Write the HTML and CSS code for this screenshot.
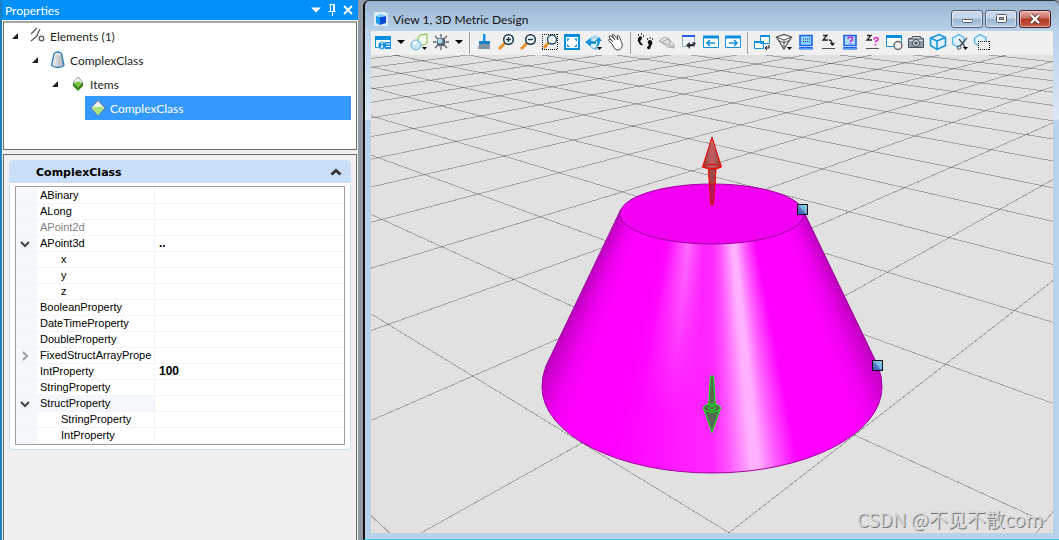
FILE: index.html
```html
<!DOCTYPE html>
<html lang="en">
<head>
  <meta charset="UTF-8">
  <meta name="viewport" content="width=device-width, initial-scale=1.0">
  <title>View 1, 3D Metric Design</title>
  <link rel="stylesheet" href="styles.css">
</head>
<body>
  <aside class="properties">
    <header class="panel-title">
      <h1>Properties</h1>
      <button class="panel-button" aria-label="Menu"><svg width="16" height="16" viewBox="0 0 16 16"><path d="M3 5.500h10L8 10.500z" fill="#fff"/></svg></button>
      <button class="panel-button" aria-label="Pin"><svg width="16" height="16" viewBox="0 0 16 16"><path d="M5.500 2.500h5M6.500 2.500v7M9.500 2.500v7M10.500 2.500v7M4.500 9.500h7M8.500 10v4" stroke="#fff" fill="none"/></svg></button>
      <button class="panel-button" aria-label="Close"><svg width="16" height="16" viewBox="0 0 16 16"><path d="M4 4l8 8M12 4l-8 8" stroke="#fff" stroke-width="2" fill="none"/></svg></button>
    </header>

    <div class="tree">
      <ul>
        <li>
          <div class="tree-row">
            <span class="toggle"></span>
            <span class="node"><svg width="20" height="20" viewBox="0 0 20 20" fill="none" stroke="#555" stroke-width="1.200"><path d="M4 8l6-6M4 15l7-6M10 9l3-6"/><circle cx="14.500" cy="12.500" r="2.300"/></svg>Elements (1)</span>
          </div>
          <ul>
            <li>
              <div class="tree-row">
                <span class="toggle"></span>
                <span class="node"><svg width="20" height="20" viewBox="0 0 20 20"><defs><linearGradient id="can"><stop offset="0" stop-color="#f4f4f4"/><stop offset="1" stop-color="#a9adb2"/></linearGradient></defs><path d="M7 3.500q4-3 7.500 0l2.500 12q-6 4-12.500 0z" fill="url(#can)" stroke="#2a7ab8" stroke-width="1.300"/><path d="M8 4.500q3-2 5.500 0" stroke="#fff" fill="none"/></svg>ComplexClass</span>
              </div>
              <ul>
                <li>
                  <div class="tree-row">
                    <span class="toggle"></span>
                    <span class="node"><svg width="20" height="20" viewBox="0 0 20 20"><path d="M11 3l5 5v4l-5 5-5-5V8z" fill="#3d8a1c"/><path d="M11 3l5 5-5 5-5-5z" fill="#e6eae6" stroke="#888" stroke-width=".6"/><path d="M7 9q4-3 8 0l-4 4z" fill="#79c53f"/></svg>Items</span>
                  </div>
                  <ul>
                    <li>
                      <div class="tree-row selected">
                        <span class="toggle leaf"></span>
                        <span class="node"><svg width="20" height="20" viewBox="0 0 20 20"><path d="M11 2.500l7 7.500-7 7.500L4 10z" fill="#f3f5f0" stroke="#667" stroke-width=".8"/><path d="M4.500 10q7-3 13 0L11 17z" fill="#a9e57d"/></svg>ComplexClass</span>
                      </div>
                    </li>
                  </ul>
                </li>
              </ul>
            </li>
          </ul>
        </li>
      </ul>
    </div>

    <div class="details">
      <section class="card">
        <header class="card-title">
          <h2>ComplexClass</h2>
          <button class="collapse" aria-label="Collapse"><svg width="12" height="10" viewBox="0 0 12 10"><path d="M1.500 7.500L6 3.500l4.500 4" stroke="#333" stroke-width="3" fill="none"/></svg></button>
        </header>
        <div class="grid-frame">
          <table class="grid">
            <colgroup><col class="col-gutter"><col class="col-name"><col></colgroup>
            <tbody>
              <tr><td></td><th scope="row">ABinary</th><td></td></tr>
              <tr><td></td><th scope="row">ALong</th><td></td></tr>
              <tr class="disabled"><td></td><th scope="row">APoint2d</th><td></td></tr>
              <tr><td><svg class="chevron" width="10" height="8" viewBox="0 0 10 8"><path d="M1 2l4 4 4-4"/></svg></td><th scope="row">APoint3d</th><td>..</td></tr>
              <tr class="child"><td></td><th scope="row">x</th><td></td></tr>
              <tr class="child"><td></td><th scope="row">y</th><td></td></tr>
              <tr class="child"><td></td><th scope="row">z</th><td></td></tr>
              <tr><td></td><th scope="row">BooleanProperty</th><td></td></tr>
              <tr><td></td><th scope="row">DateTimeProperty</th><td></td></tr>
              <tr><td></td><th scope="row">DoubleProperty</th><td></td></tr>
              <tr><td><svg class="chevron closed" width="10" height="10" viewBox="0 0 10 10"><path d="M3 1l4 4-4 4"/></svg></td><th scope="row">FixedStructArrayPrope</th><td></td></tr>
              <tr><td></td><th scope="row">IntProperty</th><td>100</td></tr>
              <tr><td></td><th scope="row">StringProperty</th><td></td></tr>
              <tr class="current"><td><svg class="chevron" width="10" height="8" viewBox="0 0 10 8"><path d="M1 2l4 4 4-4"/></svg></td><th scope="row">StructProperty</th><td></td></tr>
              <tr class="child"><td></td><th scope="row">StringProperty</th><td></td></tr>
              <tr class="child"><td></td><th scope="row">IntProperty</th><td></td></tr>
            </tbody>
          </table>
        </div>
      </section>
    </div>
  </aside>

  <main class="window">
    <header class="window-title">
      <svg width="16" height="16" viewBox="0 0 16 16"><path d="M1 1h12l2 2v12H1z" fill="#dcebf8"/><path d="M3 5l4 1v8l-4-2z" fill="#1b9af0"/><path d="M7 6l6-1v7l-6 2z" fill="#0648d8"/><path d="M3 5l5-2 5 2-6 1z" fill="#7cd0ff"/></svg>
      <h2>View 1, 3D Metric Design</h2>
      <div class="window-buttons">
        <button aria-label="Minimize"><svg width="14" height="12" viewBox="0 0 14 12"><rect x="2.500" y="6.500" width="10" height="3" rx="1" fill="#fff" stroke="#555a66"/></svg></button>
        <button aria-label="Maximize"><svg width="14" height="12" viewBox="0 0 14 12"><rect x="2.500" y="1.500" width="10" height="8" rx="1" fill="#fff" stroke="#555a66"/><rect x="5.500" y="4.500" width="4" height="2" fill="#9db5d0" stroke="#555a66"/></svg></button>
        <button class="close" aria-label="Close"><svg width="14" height="12" viewBox="0 0 14 12"><path d="M3 2l8 8M11 2l-8 8" stroke="#60353a" stroke-width="4"/><path d="M3 2l8 8M11 2l-8 8" stroke="#fff" stroke-width="2.400"/></svg></button>
      </div>
    </header>

    <div class="toolbar">
      <button aria-label="View attributes"><svg viewBox="0 0 18 18"><path d="M1.500 4.500h15v10h-15z" fill="#fff" stroke="#1490dd"/><path d="M1 3h16v4H1z" fill="#0a8fe0"/><circle cx="8" cy="12.500" r="4" fill="#1490dd" stroke="#f0f0f0" stroke-width=".6"/><path d="M8 9.500v1.500M8 12v3" stroke="#fff" stroke-width="1.500"/><path d="M11 9h6v7h-6z" fill="#1490dd"/><path d="M12 11h4M12 13.500h4" stroke="#fff"/></svg></button>
      <button class="drop" aria-label="View attributes list"><svg viewBox="0 0 8 18"><path d="M0 7h8l-4 4z"/></svg></button>
      <button aria-label="Display style"><svg viewBox="0 0 18 18"><path d="M8 5l2-3 7-1v9l-3 2H8z" fill="#f4fbe9" stroke="#7ab93c"/><circle cx="6" cy="12" r="5" fill="#c5e6f8" stroke="#6cb4e0"/><circle cx="5" cy="10" r="2" fill="#fff"/><path d="M12 14h5l-2.500 3z"/></svg></button>
      <button aria-label="Brightness"><svg viewBox="0 0 18 18"><path d="M9 1v3M9 14v3M1 9h3M14 9h3M3 3l3 3M15 3l-3 3M3 15l3-3M15 15l-3-3" stroke="#51606a" stroke-width="1.300"/><circle cx="9" cy="9" r="4.500" fill="#56656f"/><circle cx="8" cy="8" r="2.500" fill="#a8dced"/></svg></button>
      <button class="drop" aria-label="Brightness list"><svg viewBox="0 0 8 18"><path d="M0 7h8l-4 4z"/></svg></button>
      <span class="separator"></span>
      <button aria-label="Update view"><svg viewBox="0 0 18 18"><path d="M8 1h2.500v8H8z" fill="#1694e6"/><path d="M4 8h11v3H4z" fill="#1681c9"/><path d="M4 11h11v5H3z" fill="#8291a0"/></svg></button>
      <button aria-label="Zoom in"><svg viewBox="0 0 18 18"><path d="M8 10l-6 6" stroke="#e8912d" stroke-width="3"/><circle cx="11.500" cy="6.500" r="4.800" fill="#f5fbff" stroke="#16364c" stroke-width="1.500"/><path d="M9 6.500h5M11.500 4v5" stroke="#16364c" stroke-width="1.400"/></svg></button>
      <button aria-label="Zoom out"><svg viewBox="0 0 18 18"><path d="M8 10l-6 6" stroke="#e8912d" stroke-width="3"/><circle cx="11.500" cy="6.500" r="4.800" fill="#f5fbff" stroke="#16364c" stroke-width="1.500"/><path d="M9 6.500h5" stroke="#16364c" stroke-width="1.500"/></svg></button>
      <button aria-label="Window area"><svg viewBox="0 0 18 18"><path class="dotted" d="M1 1.500h16M1 16.500h16M1.500 1v16M16.500 1v16"/><path d="M8 9l-5 6" stroke="#e8912d" stroke-width="3"/><circle cx="11" cy="6.500" r="4.500" fill="#eaf7ff" stroke="#245069" stroke-width="1.300"/></svg></button>
      <button aria-label="Fit view"><svg viewBox="0 0 18 18"><path d="M2 2h14v14H2z" fill="#fff" stroke="#0a8fe0" stroke-width="2"/><path d="M1 2.500h16" stroke="#0a8fe0" stroke-width="3"/><path d="M4 5.500h3l-3 3zM14 5.500h-3l3 3zM4 14h3l-3-3zM14 14h-3l3-3z" fill="#0a8fe0"/></svg></button>
      <button aria-label="Rotate view"><svg viewBox="0 0 18 18"><path d="M3 7Q7 1 13 3v3Q7 5 6 9z" fill="#a9d8ee"/><path d="M0 9l6-4v3h5v3H6v3zM14 4l3 4h-2q0 5-5 7 3-4 2-7h-2z" fill="#1793dc"/><path d="M5 13q3 3 8 1l-1 3q-5 0-7-4z" fill="#78bbdf"/><path d="M12 14h5l-2.500 3z"/></svg></button>
      <button aria-label="Pan view"><svg viewBox="0 0 18 18"><path d="M6 12L2 8q-1-2 1-2l3 3-4-5q0-2 2-1l4 4-3-5q1-1 2 0l4 5-1-4q1-1 2 0l2 5q2 3 1 6-2 4-5 3-2 0-4-4z" fill="#fff" stroke="#4c4c4c"/></svg></button>
      <span class="separator"></span>
      <button aria-label="Walk"><svg viewBox="0 0 18 18"><path d="M2 5q2-3 4-1 0 3-2 4l3 4q-3 1-4-2-2-2-1-5zM12 8q2-2 4 0 1 3-1 5l-1 3q-3 1-3-2l2-2q-2-2-1-4z" fill="#111"/><path d="M2 2h1M5 1h1M7 3h1M11 6h1M13.500 5h1M16 6h1" stroke="#111" stroke-width="1.600"/></svg></button>
      <button aria-label="Fly"><svg viewBox="0 0 18 18"><path d="M1 8q6-6 10-2l5 6v3l-6-1z" fill="#e4e4e4" stroke="#aaa"/><path d="M2 8l9 4 5 2M5 8l6-2 1 6" fill="none" stroke="#aaa"/></svg></button>
      <button aria-label="Navigate view"><svg viewBox="0 0 18 18"><path d="M2.500 3.500h12v10h-12z" fill="#eef5ff" stroke="#9ab"/><path d="M2 2h13v2H2z" fill="#2a5cdd"/><path d="M6 12l4-3v2h3l-1-2 4 1-2 3h-4v3z" fill="#333"/></svg></button>
      <button aria-label="View previous"><svg viewBox="0 0 18 18"><path d="M1.500 4.500h15v10h-15z" fill="#fff" stroke="#1490dd"/><path d="M1 4h16" stroke="#0a8fe0" stroke-width="3"/><path d="M5 10h8M8 7l-3 3 3 3" stroke="#1490dd" stroke-width="1.600" fill="none"/></svg></button>
      <button aria-label="View next"><svg viewBox="0 0 18 18"><path d="M1.500 4.500h15v10h-15z" fill="#fff" stroke="#1490dd"/><path d="M1 4h16" stroke="#0a8fe0" stroke-width="3"/><path d="M5 10h8M10 7l3 3-3 3" stroke="#1490dd" stroke-width="1.600" fill="none"/></svg></button>
      <span class="separator"></span>
      <button aria-label="Copy view"><svg viewBox="0 0 18 18"><path d="M7.500 2.500h9v8h-9zM1.500 8.500h9v7h-9z" fill="#fff" stroke="#1490dd"/><path d="M7 3h10M1 9h10" stroke="#0a8fe0" stroke-width="2"/><path d="M12 15h4v-3M14 13l-2 2 2 2" stroke="#111" fill="none"/></svg></button>
      <button aria-label="Change view perspective"><svg viewBox="0 0 18 18" fill="none" stroke="#555" stroke-width="1.200"><path d="M1.500 4L9 1.500 16.500 4 9 16z" fill="#fafafa"/><path d="M1.500 4L9 7l7.500-3M9 7v9M4 7.500l5 2.500 5-2.500" stroke-width="1"/><path d="M12 14h5l-2.500 3z" fill="#000" stroke="none"/></svg></button>
      <button aria-label="Set display depth"><svg viewBox="0 0 18 18"><path d="M3 2.500h12v10H3z" fill="#8fd0ff" stroke="#1c62e8" stroke-width="1.600"/><path d="M2.500 14.500h13v1.500h-13z" fill="#8fd0ff" stroke="#1c62e8"/><path d="M6 6h7M6 8.500h7" stroke="#123a8c" stroke-dasharray="1 1"/></svg></button>
      <button aria-label="Set active depth"><svg viewBox="0 0 18 18"><path d="M4 2.500h4L4 7h5M10 7q3 0 3.500 5M11.500 10l2 2 2-2" stroke="#222" stroke-width="1.300" fill="none"/><path d="M3 15.500h13" stroke="#555"/></svg></button>
      <button aria-label="Show display depth"><svg viewBox="0 0 18 18"><path d="M3 2.500h12v10H3z" fill="#a8dcff" stroke="#1c62e8" stroke-width="1.600"/><path d="M2.500 14.500h13v1.500h-13z" fill="#8fd0ff" stroke="#1c62e8"/><path d="M7 6q0-2 2.500-2t2 3q-2 0-2 2M9.500 10v1" stroke="#c02bd0" stroke-width="1.500" fill="none"/></svg></button>
      <button aria-label="Show active depth"><svg viewBox="0 0 18 18"><path d="M4 2.500h4L4 7h5" stroke="#222" stroke-width="1.300" fill="none"/><path d="M11 6.500q0-2 2.500-2t1 3q-2 0-2 2M12.500 11v1.500" stroke="#e02bd0" stroke-width="1.600" fill="none"/><path d="M3 15.500h13" stroke="#555"/></svg></button>
      <button aria-label="Camera settings"><svg viewBox="0 0 18 18"><path d="M1.500 2.500h15v11h-15z" fill="#fff" stroke="#1490dd"/><path d="M1 3.500h16" stroke="#0a8fe0" stroke-width="3"/><circle cx="13" cy="12.500" r="4" fill="#f0f0f0" stroke="#666" stroke-width="1.400"/></svg></button>
      <button aria-label="Photo"><svg viewBox="0 0 18 18"><path d="M1.500 5.500h3l1-2h8l1 2h2v9h-15z" fill="#8c98a2" stroke="#46525c"/><path d="M2 7.500h14M6 4.500h7" stroke="#d9e1e7"/><circle cx="9" cy="10" r="3.500" fill="#e8eef3" stroke="#36414a"/><circle cx="9" cy="10" r="1.800" fill="#46525c"/></svg></button>
      <button aria-label="Clip volume"><svg viewBox="0 0 18 18"><path d="M1.500 5L10 1.500l6.500 3v8L8 16.500l-6.500-4z" fill="#ddf2ff" stroke="#1490dd" stroke-width="1.500"/><path d="M1.500 5L8 8l8.500-3.500M8 8v8" fill="none" stroke="#1490dd" stroke-width="1.500"/></svg></button>
      <button aria-label="Clip by element"><svg viewBox="0 0 18 18"><path d="M1.500 5L8 1.500l5 3v6L7 14l-5.500-3z" fill="#ddf2ff" stroke="#48aee8" stroke-width="1.200"/><path d="M16 5l-7 8M8 6l6 8" stroke="#555" stroke-width="1.300"/><circle cx="8" cy="14.500" r="1.800" fill="none" stroke="#555"/><path d="M12 14h5l-2.500 3z"/></svg></button>
      <button aria-label="Clip mask"><svg viewBox="0 0 18 18"><path d="M1.500 5L7 1.500l6 3v5L6 13l-4.500-3z" fill="#ddf2ff" stroke="#48aee8" stroke-width="1.200"/><path d="M5 8h12v9H5z" fill="#f0f0f0"/><path class="dotted" d="M5 8.500h12M5 16.500h12M5.500 8v9M16.500 8v9"/></svg></button>
    </div>

    <div class="view">
      <svg class="scene" viewBox="371 55 682 478" preserveAspectRatio="xMidYMid slice">
        <defs>
          <linearGradient id="handle" x1="0" y1="1" x2="1" y2="0">
            <stop offset="0" stop-color="#3450b4"/>
            <stop offset=".5" stop-color="#5a80c8"/>
            <stop offset=".5" stop-color="#6fb0d8"/>
            <stop offset="1" stop-color="#8fd4ee"/>
          </linearGradient>
          <linearGradient id="redHead">
            <stop offset="0" stop-color="#8a4444"/>
            <stop offset=".5" stop-color="#c06060"/>
            <stop offset="1" stop-color="#8a4444"/>
          </linearGradient>
          <clipPath id="coneClip">
            <path d="M620 212L546 366Q542 376 542 387A170 86 0 0 0 882 387Q882 376 878 366L804 212z"/>
          </clipPath>
        </defs>
        <g id="floor" class="floor"></g>

        <g clip-path="url(#coneClip)">
          <foreignObject x="540" y="184" width="344" height="290">
            <div class="cone-side"></div>
          </foreignObject>
        </g>
        <path class="cone-edge" d="M621 209L546 366Q542 376 542 387A170 86 0 0 0 882 387Q882 376 878 366L803 210"/>
        <ellipse class="cone-top" cx="712" cy="214" rx="92" ry="30"/>

        <g class="arrow-up">
          <path d="M708.500 167L710.500 204.500h3L716 167z" fill="#a0205c"/>
          <path d="M708.500 167L709.500 184h5.500L716 167z" fill="#9a4a4a"/>
          <path d="M712 137l9.500 30q-9 4-19 0z" fill="url(#redHead)"/>
          <ellipse cx="712" cy="166.500" rx="9" ry="2" fill="none"/>
        </g>
        <g class="arrow-down">
          <path d="M710.500 376h3l2 32h-7z"/>
          <path d="M703.500 408L712 432.500l8.500-24.500z"/>
          <ellipse cx="712" cy="408" rx="8.500" ry="4"/>
          <ellipse cx="712" cy="408" rx="3.500" ry="2"/>
        </g>
        <rect class="handle" x="797.500" y="204.500" width="10" height="10"/>
        <rect class="handle" x="872.500" y="360.500" width="10" height="10"/>
      </svg>
      <span class="watermark">CSDN @不见不散com</span>
    </div>
  </main>

  <script>
    // perspective projection of a floor point (i, j) onto the view
    function project(i, j) {
      const w = 1 + 0.19 * i + 0.172 * j;
      return [(729 + 287.9 * i - 46.8 * j) / w, (532.7 - 15 * i - 13.6 * j) / w];
    }

    const floor = document.getElementById('floor');

    function addLine(from, to) {
      const line = document.createElementNS('http://www.w3.org/2000/svg', 'line');
      line.setAttribute('x1', from[0]);
      line.setAttribute('y1', from[1]);
      line.setAttribute('x2', to[0]);
      line.setAttribute('y2', to[1]);
      floor.appendChild(line);
    }

    for (let k = -1; k <= 26; k++) {
      addLine(project(k, -1), project(k, 200));
      addLine(project(-1, k), project(200, k));
    }
  </script>
</body>
</html>
```
FILE: styles.css
```css
* {
  box-sizing: border-box;
}
body {
  display: flex;
  height: 100vh;
  margin: 0;
  overflow: hidden;
  background-color: #929ba5;
  font-family: Lato, "Noto Sans", sans-serif;
  font-size: 12px;
  color: #1e1e1e;
}
h1, h2, ul {
  margin: 0;
  padding: 0;
  font-size: 12px;
  font-weight: normal;
}
button {
  display: flex;
  align-items: center;
  justify-content: center;
  padding: 0;
  border: none;
  background: none;
}

/* properties panel */
.properties {
  display: flex;
  flex-direction: column;
  flex: 0 0 358px;
  border-left: 2px solid #1a80c4;
  background-color: #f0f0f0;
}
.panel-title {
  display: flex;
  align-items: center;
  height: 20px;
  padding: 0 2px 0 3px;
  background-color: #0390f8;
  color: #fff;
}
.panel-title h1 {
  flex: 1;
}
.panel-button {
  width: 16px;
  height: 16px;
}
.tree {
  height: 129px;
  margin: 1px 1px 0 1px;
  padding: 1px 5px 0 4px;
  border: 1px solid #6b6b6b;
  border-top: 2px solid #a5a5a5;
  background-color: #fff;
}
.tree ul {
  list-style: none;
}
.tree ul ul {
  padding-left: 20px;
}
.tree-row {
  display: flex;
  height: 24px;
}
.toggle {
  flex: 0 0 17px;
  padding: 9px 0 0 4px;
}
.toggle::before {
  content: "";
  display: block;
  width: 6px;
  height: 6px;
  background-color: #1e1e1e;
  clip-path: polygon(100% 0, 100% 100%, 0 100%);
}
.toggle.leaf::before {
  display: none;
}
.node {
  display: flex;
  align-items: center;
  flex: 1;
  gap: 3px;
  padding-left: 2px;
}
.selected .node {
  background-color: #3399ff;
  color: #fff;
}
.details {
  flex: 1;
  margin: 4px 1px 0 1px;
  padding: 5px 5px 0 5px;
  border: 1px solid #6b6b6b;
  border-bottom: none;
}
.card {
  border: 1px solid #c9dff9;
  border-radius: 4px;
  background-color: #fff;
}
.card-title {
  display: flex;
  align-items: center;
  justify-content: space-between;
  height: 22px;
  padding: 0 8px 0 26px;
  background-color: #c9dff9;
}
.card-title h2 {
  font-family: "DejaVu Sans", sans-serif;
  font-size: 11px;
  font-weight: bold;
  color: #000;
}
.grid-frame {
  margin: 3px 5px 4px 5px;
  padding-top: 1px;
  border: 1px solid #a0a0a0;
}
.grid {
  width: 100%;
  table-layout: fixed;
  border-spacing: 0;
  font-family: "Liberation Sans", sans-serif;
  font-size: 11px;
  color: #000;
}
.col-gutter {
  width: 21px;
}
.col-name {
  width: 118px;
}
.grid td,
.grid th {
  height: 16px;
  padding: 0;
  border-bottom: 1px solid #f3f4f7;
  line-height: 15px;
  text-align: left;
  white-space: nowrap;
  overflow: hidden;
}
.grid th {
  padding-left: 3px;
  border-right: 1px solid #f0f2f6;
  font-weight: normal;
}
.grid td {
  padding-left: 4px;
  font-size: 12px;
  font-weight: bold;
}
.grid td:first-child {
  background-color: #f4f7fc;
}
.grid .child th {
  padding-left: 24px;
}
.grid .disabled th {
  color: #7f7f7f;
}
.grid .current th {
  background-color: #f4f7fc;
}
.chevron {
  display: block;
  fill: none;
  stroke: #444;
  stroke-width: 2;
}
.chevron.closed {
  stroke: #a0a0a0;
}

/* view window */
.window {
  display: flex;
  flex-direction: column;
  flex: 1;
  min-width: 0;
  margin-left: 5px;
  padding: 0 6px 6px 6px;
  border-left: 2px solid #111;
  border-top: 1px solid #2a2c34;
  border-bottom: 1px solid #35c6dc;
  border-radius: 6px 6px 0 0;
  background: linear-gradient(#99b4d1, #b9d1ea 30px, #dce8f5 118px, #b9d1ea 120px);
}
.window-title {
  display: flex;
  align-items: center;
  gap: 4px;
  height: 30px;
  padding: 6px 0 0 2px;
  color: #111;
}
.window-title h2 {
  flex: 1;
}
.window-buttons {
  display: flex;
  gap: 2px;
  padding-right: 2px;
}
.window-buttons button {
  width: 32px;
  height: 18px;
  border: 1px solid #4f5e75;
  border-radius: 3px;
  background: linear-gradient(#c5d7ea 45%, #9cb5d0 50%, #b9d0e8);
  box-shadow: inset 0 0 0 1px rgba(255, 255, 255, 0.5);
}
.window-buttons .close {
  border-color: #43141c;
  background: linear-gradient(#e0a197 10%, #cb6c5d 45%, #b13622 50%, #c75b40);
}
.toolbar {
  display: flex;
  align-items: center;
  height: 24px;
  padding-left: 1px;
  background-color: #f0f0f0;
}
.toolbar button {
  flex: 0 0 22px;
  height: 24px;
  padding-bottom: 2px;
}
.toolbar svg {
  width: 18px;
  height: 18px;
}
.toolbar .drop {
  flex-basis: 14px;
}
.toolbar .drop svg {
  width: 8px;
}
.dotted {
  fill: none;
  stroke: #111;
  stroke-dasharray: 1 1;
  shape-rendering: crispEdges;
}
.separator {
  flex: 0 0 7px;
  height: 22px;
  background: linear-gradient(#a0a0a0, #a0a0a0) 3px 0 / 1px 100% no-repeat;
}
.view {
  position: relative;
  flex: 1;
  min-height: 0;
  background-color: #e1e1e1;
}
.scene {
  display: block;
  width: 100%;
  height: 100%;
}
.floor {
  stroke: #000;
  stroke-opacity: 0.27;
  shape-rendering: crispEdges;
}
/* light falls in rays that spread from the tip of the cone */
.cone-side {
  height: 290px;
  background: conic-gradient(at 172px -165px,
    #a000a0 154deg, #c800c8 155deg, #f000f0 158deg, #ff00ff 161deg, #ff00ff 169deg,
    #ff60ff 172deg, #ffb0ff 174deg, #ffb0ff 175deg, #ff50ff 178deg, #ff28ff 180deg,
    #ff1cff 184deg, #ff00ff 193deg, #ff00ff 199deg, #f000f0 202deg, #c800c8 205deg, #a000a0 206deg);
}
.cone-side::before {
  content: "";
  display: block;
  height: 290px;
  background: conic-gradient(at 172px -165px,
    rgba(255, 120, 255, 0) 182deg, rgba(255, 120, 255, 0.9) 186deg, rgba(255, 120, 255, 0) 191deg);
  mask-image: linear-gradient(#000 20%, transparent 80%);
}
.cone-edge {
  fill: none;
  stroke: #a000a0;
}
.cone-top {
  fill: #f200f2;
  stroke: #a000a0;
}
.arrow-up {
  stroke: #ff0000;
}
.arrow-down {
  fill: #566a56;
  stroke: #00ff00;
}
.handle {
  fill: url(#handle);
  stroke: #101018;
}
.watermark {
  position: absolute;
  right: 10px;
  bottom: 0;
  font-family: "Noto Sans CJK SC", sans-serif;
  font-size: 19px;
  line-height: 28px;
  color: #d8d8d8;
  text-shadow: 1px 1px 0 #777;
}
```
